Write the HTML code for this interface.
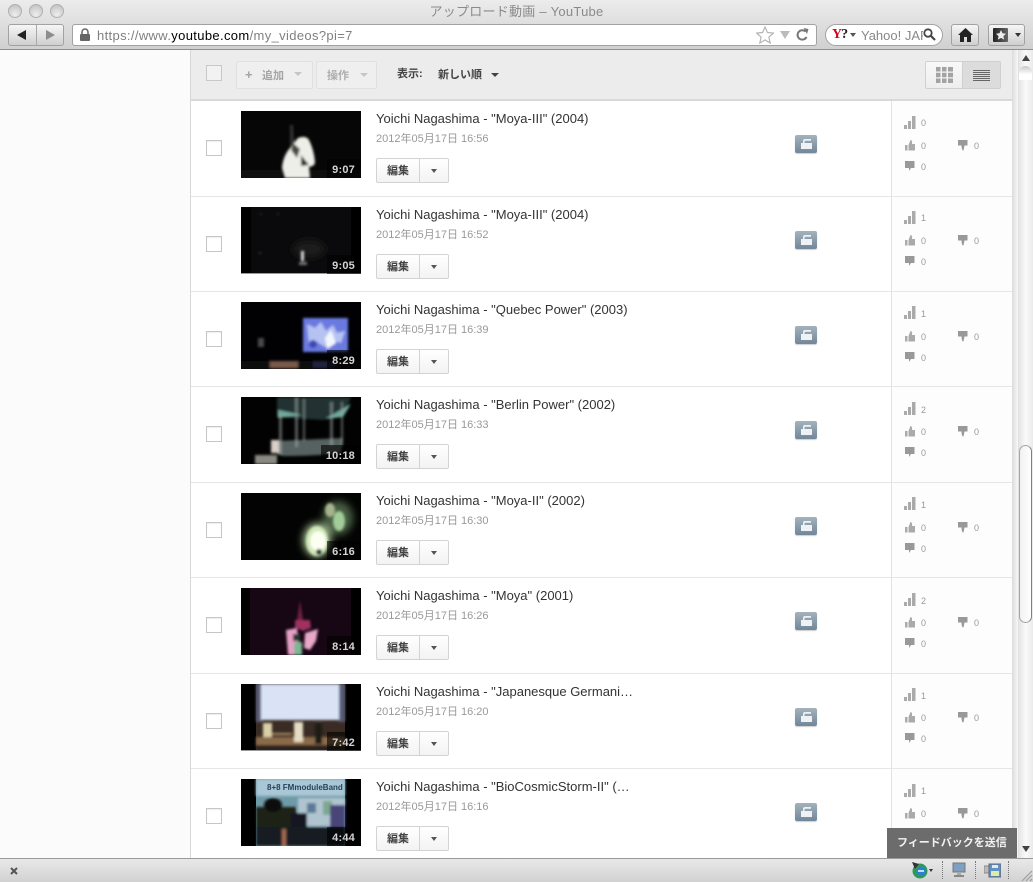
<!DOCTYPE html>
<html lang="ja"><head><meta charset="utf-8"><title>アップロード動画 - YouTube</title>
<style>
html,body{margin:0;padding:0;width:1033px;height:882px;overflow:hidden;background:#fff;font-family:"Liberation Sans","Noto Sans CJK JP",sans-serif}
div,span,svg{position:absolute;box-sizing:border-box}
.row{left:191px;width:821px;height:96px;border-bottom:1px solid #e6e6e6;overflow:hidden}
.stat{left:700px;top:1px;width:121px;height:100%;background:#fdfdfd;border-left:1px solid #e2e2e2}
.cb{left:15px;top:40px;width:16px;height:16px;border:1px solid #c6c6c6;background:#fff;box-shadow:inset 0 1px 1px #eee}
.th{left:50px;top:11px;width:120px;height:67px;background:#000;overflow:hidden}
.th svg{left:0;top:0}
.d{right:0;bottom:0;height:19px;padding:4px 6px 0 5px;background:rgba(0,0,0,.6);color:#d4d4d4;font:bold 11px/14px "Liberation Sans",sans-serif;letter-spacing:.2px}
.t{left:185px;top:11px;font-size:13px;line-height:16px;color:#333;white-space:nowrap}
.dt{left:185px;top:32px;font-size:11px;line-height:14px;color:#999;white-space:nowrap}
.b{left:185px;top:58px;width:73px;height:25px;border:1px solid #d3d3d3;border-radius:2px;background:linear-gradient(#fff,#f3f3f3)}
.b i{position:absolute;left:42px;top:0;width:1px;height:23px;background:#d3d3d3}
.b b{position:absolute;left:10px;top:5px;font-size:11px;line-height:15px;color:#444;font-weight:bold}
.b u{position:absolute;left:54px;top:10px;width:0;height:0;border:3.500px solid transparent;border-top:4px solid #555;border-bottom:0}
.lk{left:604px;top:35px;width:22px;height:18px;border-radius:2px;background:linear-gradient(#a3b3bd,#72869a);box-shadow:0 1px 1px #ccc}
.n{font-size:9px;line-height:10px;color:#999}
</style></head><body>

<!-- page -->
<div style="left:0;top:50px;width:190px;height:808px;background:#fbfbfb"></div>
<div style="left:190px;top:50px;width:1px;height:808px;background:#d8d8d8"></div>
<div style="left:1012px;top:50px;width:6px;height:808px;background:linear-gradient(90deg,#dcdcdc,#f7f7f7)"></div>

<!-- rows -->
<svg width="0" height="0"><defs><filter id="bl" x="-20%" y="-20%" width="140%" height="140%"><feGaussianBlur stdDeviation="1.300"/></filter><filter id="bl2" x="-30%" y="-30%" width="160%" height="160%"><feGaussianBlur stdDeviation="4"/></filter></defs></svg>

<div class="row" style="top:100px;height:97px"><div class="stat"></div><div class="cb"></div>
<div class="th"><svg width="120" height="67"><rect width="120" height="67" fill="#060606"/><rect y="59" width="120" height="8" fill="#0f0f0f"/><g filter="url(#bl)"><path d="M49 14l3 0 1 20-4 0z" fill="#333"/><path d="M57 27q8-3 11 2q5 10 6 22q0 4-6 5l1 11H44l-3-10q1-12 8-20q4-5 8-10z" fill="#eeeee8"/><path d="M52 32l7 6-3 9-6-8z" fill="#4a4640"/><path d="M60 44l8 10-8 1z" fill="#292929"/></g></svg><div class="d">9:07</div></div>
<div class="t">Yoichi Nagashima - "Moya-III" (2004)</div><div class="dt">2012年05月17日 16:56</div>
<div class="b"><i></i><b>編集</b><u></u></div>
<div class="lk"><svg width="22" height="18"><path d="M6 8h11v6H6zM8 8V6q0-2 2-2h6v1.700h-5.500q-1 0-1 1V8z" fill="#eef2f4"/></svg></div>
<svg style="left:713px;top:16px" width="12" height="14"><path d="M0 9h3v4H0zM4 5h3v8H4zM8 0h3.500v13H8z" fill="#aaa"/></svg><div class="n" style="left:730px;top:18px">0</div>
<svg style="left:714px;top:40px" width="10" height="11"><path d="M0 5h2.500v5.500H0zM3.500 5l2-5q2 0 1.500 4h3v6.500H3.500z" fill="#aaa"/></svg><div class="n" style="left:730px;top:41px">0</div>
<svg style="left:767px;top:40px" width="10" height="11"><path d="M0 0h9.500v5.500H6.500l-1 5q-2 0-2-5H0z" fill="#999"/></svg><div class="n" style="left:783px;top:41px">0</div>
<svg style="left:714px;top:61px" width="10" height="11"><path d="M0 0h9.500v7H6l-2 3V7H0z" fill="#999"/></svg><div class="n" style="left:730px;top:62px">0</div>
</div>

<div class="row" style="top:196px"><div class="stat"></div><div class="cb"></div>
<div class="th"><svg width="120" height="67"><rect width="120" height="67" fill="#000"/><rect x="10" width="100" height="66" fill="#0a0a0c"/><g filter="url(#bl2)"><ellipse cx="68" cy="42" rx="16" ry="9" fill="#1a1a1a"/></g><g filter="url(#bl)"><rect x="60" y="44" width="3" height="10" fill="#ddd"/><rect x="58" y="55" width="8" height="3" fill="#777"/><circle cx="19" cy="46" r="1" fill="#444"/><circle cx="20" cy="7" r="1" fill="#333"/><circle cx="37" cy="7" r="1" fill="#333"/></g><rect y="66" width="120" height="1" fill="#999"/></svg><div class="d">9:05</div></div>
<div class="t">Yoichi Nagashima - "Moya-III" (2004)</div><div class="dt">2012年05月17日 16:52</div>
<div class="b"><i></i><b>編集</b><u></u></div>
<div class="lk"><svg width="22" height="18"><path d="M6 8h11v6H6zM8 8V6q0-2 2-2h6v1.700h-5.500q-1 0-1 1V8z" fill="#eef2f4"/></svg></div>
<svg style="left:713px;top:15px" width="12" height="14"><path d="M0 9h3v4H0zM4 5h3v8H4zM8 0h3.500v13H8z" fill="#aaa"/></svg><div class="n" style="left:730px;top:17px">1</div>
<svg style="left:714px;top:39px" width="10" height="11"><path d="M0 5h2.500v5.500H0zM3.500 5l2-5q2 0 1.500 4h3v6.500H3.500z" fill="#aaa"/></svg><div class="n" style="left:730px;top:40px">0</div>
<svg style="left:767px;top:39px" width="10" height="11"><path d="M0 0h9.500v5.500H6.500l-1 5q-2 0-2-5H0z" fill="#999"/></svg><div class="n" style="left:783px;top:40px">0</div>
<svg style="left:714px;top:60px" width="10" height="11"><path d="M0 0h9.500v7H6l-2 3V7H0z" fill="#999"/></svg><div class="n" style="left:730px;top:61px">0</div>
</div>

<div class="row" style="top:291px"><div class="stat"></div><div class="cb"></div>
<div class="th"><svg width="120" height="67"><rect width="120" height="67" fill="#010104"/><g filter="url(#bl)"><rect x="62" y="16" width="45" height="34" fill="#6a7ae0"/><path d="M66 22l8 4 6-6 5 9 7-6 4 8 8-2-4 12-10-3-6 7-8-5-8 3z" fill="#b6c3f2"/><path d="M84 36l6-8 5 13-9 6z" fill="#f4f6ff"/><circle cx="72" cy="42" r="4" fill="#3c4ab0"/><rect y="59" width="120" height="8" fill="#0e0a0a"/><rect x="29" y="59" width="28" height="7" fill="#7a5a48"/><rect x="72" y="59" width="22" height="7" fill="#24223c"/><rect x="17" y="36" width="6" height="9" fill="#4a4a4a"/></g></svg><div class="d">8:29</div></div>
<div class="t">Yoichi Nagashima - "Quebec Power" (2003)</div><div class="dt">2012年05月17日 16:39</div>
<div class="b"><i></i><b>編集</b><u></u></div>
<div class="lk"><svg width="22" height="18"><path d="M6 8h11v6H6zM8 8V6q0-2 2-2h6v1.700h-5.500q-1 0-1 1V8z" fill="#eef2f4"/></svg></div>
<svg style="left:713px;top:15px" width="12" height="14"><path d="M0 9h3v4H0zM4 5h3v8H4zM8 0h3.500v13H8z" fill="#aaa"/></svg><div class="n" style="left:730px;top:18px">1</div>
<svg style="left:714px;top:40px" width="10" height="11"><path d="M0 5h2.500v5.500H0zM3.500 5l2-5q2 0 1.500 4h3v6.500H3.500z" fill="#aaa"/></svg><div class="n" style="left:730px;top:41px">0</div>
<svg style="left:767px;top:40px" width="10" height="11"><path d="M0 0h9.500v5.500H6.500l-1 5q-2 0-2-5H0z" fill="#999"/></svg><div class="n" style="left:783px;top:41px">0</div>
<svg style="left:714px;top:61px" width="10" height="11"><path d="M0 0h9.500v7H6l-2 3V7H0z" fill="#999"/></svg><div class="n" style="left:730px;top:62px">0</div>
</div>

<div class="row" style="top:386px;height:97px"><div class="stat"></div><div class="cb"></div>
<div class="th"><svg width="120" height="67"><rect width="120" height="67" fill="#020202"/><g filter="url(#bl)"><path d="M36 0h74l-4 10-24 13-46-3z" fill="#233130"/><path d="M37 13l24 5-24 3zM84 22l26-15-8 13z" fill="#6fa89c"/><path d="M36 44l66-3-2 15q-25 3-58 3l-6-2z" fill="#566260"/><path d="M38 18h3v40h-3zM54 0h3v50h-3zM62 2h2v42h-2zM89 5h3v44h-3zM100 5h2v44h-2z" fill="#9aa8a5" opacity=".55"/><path d="M30 43h8v13h-8z" fill="#d9cfc7"/><path d="M14 58h22v9H14z" fill="#8a8a82"/></g></svg><div class="d">10:18</div></div>
<div class="t">Yoichi Nagashima - "Berlin Power" (2002)</div><div class="dt">2012年05月17日 16:33</div>
<div class="b"><i></i><b>編集</b><u></u></div>
<div class="lk"><svg width="22" height="18"><path d="M6 8h11v6H6zM8 8V6q0-2 2-2h6v1.700h-5.500q-1 0-1 1V8z" fill="#eef2f4"/></svg></div>
<svg style="left:713px;top:16px" width="12" height="14"><path d="M0 9h3v4H0zM4 5h3v8H4zM8 0h3.500v13H8z" fill="#aaa"/></svg><div class="n" style="left:730px;top:19px">2</div>
<svg style="left:714px;top:40px" width="10" height="11"><path d="M0 5h2.500v5.500H0zM3.500 5l2-5q2 0 1.500 4h3v6.500H3.500z" fill="#aaa"/></svg><div class="n" style="left:730px;top:41px">0</div>
<svg style="left:767px;top:40px" width="10" height="11"><path d="M0 0h9.500v5.500H6.500l-1 5q-2 0-2-5H0z" fill="#999"/></svg><div class="n" style="left:783px;top:41px">0</div>
<svg style="left:714px;top:61px" width="10" height="11"><path d="M0 0h9.500v7H6l-2 3V7H0z" fill="#999"/></svg><div class="n" style="left:730px;top:62px">0</div>
</div>

<div class="row" style="top:482px"><div class="stat"></div><div class="cb"></div>
<div class="th"><svg width="120" height="67"><rect width="120" height="67" fill="#020302"/><g filter="url(#bl2)"><ellipse cx="97" cy="25" rx="15" ry="17" fill="#4a6044"/><ellipse cx="76" cy="47" rx="14" ry="17" fill="#a0b88e"/></g><g filter="url(#bl)"><ellipse cx="98" cy="28" rx="6" ry="10" fill="#a2cc98"/><ellipse cx="89" cy="17" rx="5" ry="7" fill="#a6b48c"/><ellipse cx="76" cy="48" rx="11" ry="15" fill="#d0e8b8"/><ellipse cx="77" cy="48" rx="8" ry="10" fill="#fbfff2"/><circle cx="78" cy="59" r="3" fill="#1a2a18"/></g></svg><div class="d">6:16</div></div>
<div class="t">Yoichi Nagashima - "Moya-II" (2002)</div><div class="dt">2012年05月17日 16:30</div>
<div class="b"><i></i><b>編集</b><u></u></div>
<div class="lk"><svg width="22" height="18"><path d="M6 8h11v6H6zM8 8V6q0-2 2-2h6v1.700h-5.500q-1 0-1 1V8z" fill="#eef2f4"/></svg></div>
<svg style="left:713px;top:15px" width="12" height="14"><path d="M0 9h3v4H0zM4 5h3v8H4zM8 0h3.500v13H8z" fill="#aaa"/></svg><div class="n" style="left:730px;top:18px">1</div>
<svg style="left:714px;top:40px" width="10" height="11"><path d="M0 5h2.500v5.500H0zM3.500 5l2-5q2 0 1.500 4h3v6.500H3.500z" fill="#aaa"/></svg><div class="n" style="left:730px;top:41px">0</div>
<svg style="left:767px;top:40px" width="10" height="11"><path d="M0 0h9.500v5.500H6.500l-1 5q-2 0-2-5H0z" fill="#999"/></svg><div class="n" style="left:783px;top:41px">0</div>
<svg style="left:714px;top:61px" width="10" height="11"><path d="M0 0h9.500v7H6l-2 3V7H0z" fill="#999"/></svg><div class="n" style="left:730px;top:62px">0</div>
</div>

<div class="row" style="top:577px;height:97px"><div class="stat"></div><div class="cb"></div>
<div class="th"><svg width="120" height="67"><rect width="120" height="67" fill="#000"/><rect x="9" width="101" height="67" fill="#170613"/><g filter="url(#bl)"><path d="M59 12l3 20h-6z" fill="#6a2440"/><path d="M54 32h15l1 8-8 3-8-4z" fill="#a03060"/><path d="M45 42l11-2 3 27H47z" fill="#e6a0c6"/><path d="M64 45l13-4-2 12-6 9-6-2z" fill="#e8a8c8"/><path d="M52 46h7v7h-7z" fill="#22382c"/><path d="M53 54h8v13h-8z" fill="#7ab892"/></g></svg><div class="d">8:14</div></div>
<div class="t">Yoichi Nagashima - "Moya" (2001)</div><div class="dt">2012年05月17日 16:26</div>
<div class="b"><i></i><b>編集</b><u></u></div>
<div class="lk"><svg width="22" height="18"><path d="M6 8h11v6H6zM8 8V6q0-2 2-2h6v1.700h-5.500q-1 0-1 1V8z" fill="#eef2f4"/></svg></div>
<svg style="left:713px;top:16px" width="12" height="14"><path d="M0 9h3v4H0zM4 5h3v8H4zM8 0h3.500v13H8z" fill="#aaa"/></svg><div class="n" style="left:730px;top:19px">2</div>
<svg style="left:714px;top:40px" width="10" height="11"><path d="M0 5h2.500v5.500H0zM3.500 5l2-5q2 0 1.500 4h3v6.500H3.500z" fill="#aaa"/></svg><div class="n" style="left:730px;top:41px">0</div>
<svg style="left:767px;top:40px" width="10" height="11"><path d="M0 0h9.500v5.500H6.500l-1 5q-2 0-2-5H0z" fill="#999"/></svg><div class="n" style="left:783px;top:41px">0</div>
<svg style="left:714px;top:61px" width="10" height="11"><path d="M0 0h9.500v7H6l-2 3V7H0z" fill="#999"/></svg><div class="n" style="left:730px;top:62px">0</div>
</div>

<div class="row" style="top:673px"><div class="stat"></div><div class="cb"></div>
<div class="th"><svg width="120" height="67"><rect width="120" height="67" fill="#000"/><rect x="15" width="89" height="66" fill="#3a2c24"/><g filter="url(#bl)"><rect x="15" width="6" height="38" fill="#555a78"/><rect x="98" width="6" height="38" fill="#555a78"/><rect x="20" width="78" height="36" fill="#d9e3f5"/><rect x="15" y="53" width="89" height="8" fill="#8a6a4a"/><rect x="22" y="39" width="9" height="14" fill="#d9d0a8"/><rect x="53" y="38" width="9" height="20" fill="#e6dcc4"/><rect x="74" y="39" width="7" height="21" fill="#1e1a18"/><rect x="31" y="49" width="20" height="2" fill="#b09068"/><rect x="15" y="61" width="89" height="5" fill="#2a201a"/></g><rect y="66" width="120" height="1" fill="#999"/></svg><div class="d">7:42</div></div>
<div class="t">Yoichi Nagashima - "Japanesque Germani…</div><div class="dt">2012年05月17日 16:20</div>
<div class="b"><i></i><b>編集</b><u></u></div>
<div class="lk"><svg width="22" height="18"><path d="M6 8h11v6H6zM8 8V6q0-2 2-2h6v1.700h-5.500q-1 0-1 1V8z" fill="#eef2f4"/></svg></div>
<svg style="left:713px;top:15px" width="12" height="14"><path d="M0 9h3v4H0zM4 5h3v8H4zM8 0h3.500v13H8z" fill="#aaa"/></svg><div class="n" style="left:730px;top:18px">1</div>
<svg style="left:714px;top:39px" width="10" height="11"><path d="M0 5h2.500v5.500H0zM3.500 5l2-5q2 0 1.500 4h3v6.500H3.500z" fill="#aaa"/></svg><div class="n" style="left:730px;top:40px">0</div>
<svg style="left:767px;top:39px" width="10" height="11"><path d="M0 0h9.500v5.500H6.500l-1 5q-2 0-2-5H0z" fill="#999"/></svg><div class="n" style="left:783px;top:40px">0</div>
<svg style="left:714px;top:60px" width="10" height="11"><path d="M0 0h9.500v7H6l-2 3V7H0z" fill="#999"/></svg><div class="n" style="left:730px;top:61px">0</div>
</div>

<div class="row" style="top:768px;height:90px;border-bottom:0"><div class="stat"></div><div class="cb"></div>
<div class="th"><svg width="120" height="67"><rect width="120" height="67" fill="#000"/><rect x="15" width="89" height="67" fill="#6f9aa8"/><g filter="url(#bl)"><rect x="15" y="0" width="89" height="17" fill="#a9c7d6"/><rect x="57" y="19" width="47" height="28" fill="#b0c4d0"/><rect x="66" y="24" width="9" height="10" fill="#5a7a98"/><rect x="82" y="22" width="9" height="14" fill="#7ea892"/><rect x="15" y="28" width="40" height="39" fill="#1c2416"/><ellipse cx="32" cy="26" rx="9" ry="7" fill="#101010"/><rect x="50" y="34" width="16" height="20" fill="#141820"/><rect x="89" y="26" width="15" height="22" fill="#4a4478"/><rect x="15" y="48" width="89" height="19" fill="#151a20"/><rect x="41" y="50" width="4" height="17" fill="#a06a50"/></g><text x="26" y="11" font-family="Liberation Sans,sans-serif" font-size="8" font-weight="bold" fill="#27415a">8+8 FMmoduleBand</text></svg><div class="d">4:44</div></div>
<div class="t">Yoichi Nagashima - "BioCosmicStorm-II" (…</div><div class="dt">2012年05月17日 16:16</div>
<div class="b"><i></i><b>編集</b><u></u></div>
<div class="lk"><svg width="22" height="18"><path d="M6 8h11v6H6zM8 8V6q0-2 2-2h6v1.700h-5.500q-1 0-1 1V8z" fill="#eef2f4"/></svg></div>
<svg style="left:713px;top:16px" width="12" height="14"><path d="M0 9h3v4H0zM4 5h3v8H4zM8 0h3.500v13H8z" fill="#aaa"/></svg><div class="n" style="left:730px;top:18px">1</div>
<svg style="left:714px;top:40px" width="10" height="11"><path d="M0 5h2.500v5.500H0zM3.500 5l2-5q2 0 1.500 4h3v6.500H3.500z" fill="#aaa"/></svg><div class="n" style="left:730px;top:41px">0</div>
<svg style="left:767px;top:40px" width="10" height="11"><path d="M0 0h9.500v5.500H6.500l-1 5q-2 0-2-5H0z" fill="#999"/></svg><div class="n" style="left:783px;top:41px">0</div>
</div>

<!-- toolbar -->
<div style="left:191px;top:50px;width:821px;height:51px;background:#ececec;border-bottom:2px solid #d9d9d9"></div>
<div style="left:206px;top:65px;width:16px;height:16px;border:1px solid #c8c8c8;background:#f2f2f2"></div>
<div style="left:236px;top:61px;width:77px;height:28px;border:1px solid #e0e0e0;border-radius:2px;background:#efefef"></div>
<div style="left:245px;top:67px;font:bold 13px/16px 'Liberation Sans',sans-serif;color:#a5a5a5">+</div>
<div style="left:262px;top:68px;font-size:11px;font-weight:bold;line-height:16px;color:#a5a5a5">追加</div>
<div style="left:294px;top:72px;border:4px solid transparent;border-top-color:#c6c6c6;border-bottom:0"></div>
<div style="left:316px;top:61px;width:61px;height:28px;border:1px solid #e0e0e0;border-radius:2px;background:#efefef"></div>
<div style="left:327px;top:68px;font-size:11px;font-weight:bold;line-height:16px;color:#adadad">操作</div>
<div style="left:360px;top:73px;border:4px solid transparent;border-top-color:#c6c6c6;border-bottom:0"></div>
<div style="left:397px;top:66px;font-size:11px;font-weight:bold;line-height:16px;color:#444;white-space:nowrap">表示:</div>
<div style="left:438px;top:67px;font-size:11px;font-weight:bold;line-height:16px;color:#444;white-space:nowrap">新しい順</div>
<div style="left:491px;top:73px;border:4px solid transparent;border-top-color:#444;border-bottom:0"></div>
<div style="left:925px;top:61px;width:76px;height:28px;border:1px solid #d0d0d0;border-radius:2px;background:linear-gradient(#f8f8f8,#eee)"></div>
<div style="left:962px;top:62px;width:38px;height:26px;background:#dcdcdc;border-left:1px solid #cfcfcf"></div>
<svg style="left:936px;top:67px" width="17" height="16"><path d="M0 0h4.500v4.500H0zM6 0h4.500v4.500H6zM12 0h5v4.500h-5zM0 5.700h4.500v4.500H0zM6 5.700h4.500v4.500H6zM12 5.700h5v4.500h-5zM0 11.500h4.500V16H0zM6 11.500h4.500V16H6zM12 11.500h5V16h-5z" fill="#a3a3a3"/></svg>
<svg style="left:973px;top:70px" width="17" height="11"><path d="M0 .5h17M0 2.500h17M0 4.500h17M0 6.500h17M0 8.500h17M0 10.500h17" stroke="#666" stroke-width="1"/></svg>

<!-- scrollbar -->
<div style="left:1018px;top:50px;width:15px;height:808px;background:linear-gradient(90deg,#e6e6e6,#fafafa 50%,#eaeaea);border-left:1px solid #e0e0e0"></div>
<div style="left:1022px;top:55px;border:4px solid transparent;border-bottom:6px solid #444;border-top:0"></div>
<div style="left:1019px;top:66px;width:13px;height:14px;border-radius:7px 7px 0 0;background:linear-gradient(#c9c9c9,#fff 60%)"></div>
<div style="left:1019px;top:445px;width:13px;height:178px;border-radius:7px;background:linear-gradient(90deg,#f1f1f1,#fff);border:1.500px solid #a4a4a4;border-right-color:#7f7f7f"></div>
<div style="left:1022px;top:846px;border:4px solid transparent;border-top:6px solid #444;border-bottom:0"></div>

<!-- feedback -->
<div style="left:887px;top:828px;width:130px;height:30px;background:#6c6c6c;color:#f2f2f2;font-size:11px;font-weight:bold;line-height:30px;padding-left:10px;white-space:nowrap">フィードバックを送信</div>

<!-- browser chrome -->
<div style="left:0;top:0;width:1033px;height:50px;background:linear-gradient(#ececec,#d0d0d0);border-bottom:1px solid #8f8f8f"></div>
<div style="left:8px;top:4px;width:14px;height:14px;border-radius:50%;border:1px solid #b0b0b0;background:radial-gradient(circle at 50% 80%,#eee,#bdbdbd)"></div>
<div style="left:29px;top:4px;width:14px;height:14px;border-radius:50%;border:1px solid #b0b0b0;background:radial-gradient(circle at 50% 80%,#eee,#bdbdbd)"></div>
<div style="left:50px;top:4px;width:14px;height:14px;border-radius:50%;border:1px solid #b0b0b0;background:radial-gradient(circle at 50% 80%,#eee,#bdbdbd)"></div>
<div style="left:0;top:3px;width:1033px;text-align:center;font-size:13px;line-height:17px;letter-spacing:.25px;color:#8a8a8a">アップロード動画 – YouTube</div>
<div style="left:8px;top:24px;width:56px;height:22px;border:1px solid #a2a2a2;border-radius:3px;background:linear-gradient(#f6f6f6,#cfcfcf)"></div>
<div style="left:36px;top:25px;width:1px;height:20px;background:#a8a8a8"></div>
<div style="left:17px;top:30px;border:5px solid transparent;border-right:9px solid #222;border-left:0"></div>
<div style="left:46px;top:30px;border:5px solid transparent;border-left:9px solid #8d8d8d;border-right:0"></div>
<div style="left:72px;top:24px;width:745px;height:22px;background:#fff;border:1px solid #a2a2a2;border-radius:3px"></div>
<svg style="left:80px;top:28px" width="10" height="13"><path d="M2 6V4a3 3 0 0 1 6 0v2" fill="none" stroke="#666" stroke-width="1.500"/><rect y="6" width="10" height="7" rx="1" fill="#666"/></svg>
<div style="left:97px;top:28px;font-size:13px;line-height:16px;letter-spacing:.35px;color:#808080;white-space:nowrap">https://www.<span style="position:static;color:#000">youtube.com</span>/my_videos?pi=7</div>
<svg style="left:756px;top:26px" width="18" height="18"><path d="M9 1l2.400 5.500 6 .6-4.500 4 1.300 5.900L9 14l-5.200 3 1.300-5.900-4.500-4 6-.6z" fill="#fff" stroke="#b5b5b5" stroke-width="1.200"/></svg>
<div style="left:780px;top:31px;border:5px solid transparent;border-top:8px solid #bbb;border-bottom:0"></div>
<svg style="left:796px;top:28px" width="13" height="14"><path d="M10.500 9A4.700 4.700 0 1 1 9.500 3.500" fill="none" stroke="#777" stroke-width="2"/><path d="M7.500 0l5 1-1.500 5z" fill="#777"/></svg>
<div style="left:825px;top:24px;width:118px;height:22px;background:#fff;border:1px solid #a2a2a2;border-radius:11px"></div>
<div style="left:832px;top:27px;width:17px;height:14px;font:bold 14px/15px 'Liberation Serif',serif;color:#d8001c;letter-spacing:-1px;white-space:nowrap">Y<span style="position:static;color:#222">?</span></div>
<div style="left:850px;top:33px;border:3.500px solid transparent;border-top:4px solid #555;border-bottom:0"></div>
<div style="left:861px;top:28px;width:62px;height:16px;overflow:hidden;font-size:13px;line-height:16px;color:#888;white-space:nowrap">Yahoo! JAPAN</div>
<svg style="left:923px;top:28px" width="13" height="13"><circle cx="5" cy="5" r="3.700" fill="none" stroke="#444" stroke-width="1.800"/><path d="M8 8l4 4" stroke="#444" stroke-width="2.200"/></svg>
<div style="left:951px;top:24px;width:28px;height:22px;border:1px solid #a2a2a2;border-radius:3px;background:linear-gradient(#f6f6f6,#cfcfcf)"></div>
<svg style="left:958px;top:28px" width="15" height="14"><path d="M7.500 0L15 7h-2v7H9V9H6v5H2V7H0z" fill="#222"/></svg>
<div style="left:988px;top:24px;width:37px;height:22px;border:1px solid #a2a2a2;border-radius:3px;background:linear-gradient(#f6f6f6,#cfcfcf)"></div>
<div style="left:993px;top:28px;width:15px;height:14px;border-radius:1px;background:linear-gradient(90deg,#222,#666)"></div>
<svg style="left:995px;top:29px" width="12" height="12"><path d="M6 1l1.500 3.300 3.500.4-2.600 2.400.7 3.500L6 8.900 2.900 10.600l.7-3.500L1 4.700l3.500-.4z" fill="#eee"/></svg>
<div style="left:1015px;top:33px;border:3.500px solid transparent;border-top:4px solid #333;border-bottom:0"></div>

<!-- status bar -->
<div style="left:0;top:858px;width:1033px;height:24px;background:linear-gradient(#e8e8e8,#d2d2d2);border-top:1px solid #9a9a9a"></div>
<svg style="left:10px;top:867px" width="8" height="8"><path d="M1 1l6 6M7 1l-6 6" stroke="#555" stroke-width="2"/></svg>
<svg style="left:911px;top:861px" width="18" height="18"><circle cx="9" cy="10" r="7.500" fill="#2d9a5a"/><circle cx="10" cy="10" r="4.500" fill="#2f7fd0"/><path d="M7 10h6" stroke="#fff" stroke-width="1.500"/><path d="M1 1l7 2-4 5z" fill="#333"/></svg>
<div style="left:929px;top:869px;border:2.500px solid transparent;border-top:3px solid #333;border-bottom:0"></div>
<div style="left:942px;top:861px;height:18px;border-left:1px dotted #777"></div>
<svg style="left:952px;top:862px" width="14" height="16"><rect x="1" y="1" width="12" height="9" fill="#7f9fc0" stroke="#777"/><rect x="5" y="10" width="4" height="3" fill="#aaa"/><rect x="2" y="13" width="10" height="2" fill="#888"/></svg>
<div style="left:975px;top:861px;height:18px;border-left:1px dotted #777"></div>
<svg style="left:984px;top:863px" width="17" height="15"><rect x="0" y="3" width="7" height="7" fill="#bbb" stroke="#888"/><rect x="5" y="1" width="12" height="13" fill="#5d93c9" stroke="#667"/><rect x="7" y="8" width="8" height="5" fill="#dfe9a8"/><rect x="8" y="2" width="6" height="3" fill="#e8e8e8"/></svg>
<div style="left:1008px;top:861px;height:18px;border-left:1px dotted #777"></div>
<svg style="left:1021px;top:870px" width="12" height="12"><path d="M11 1L1 11M11 5L5 11M11 9L9 11" stroke="#999" stroke-width="1"/></svg>
</body></html>
